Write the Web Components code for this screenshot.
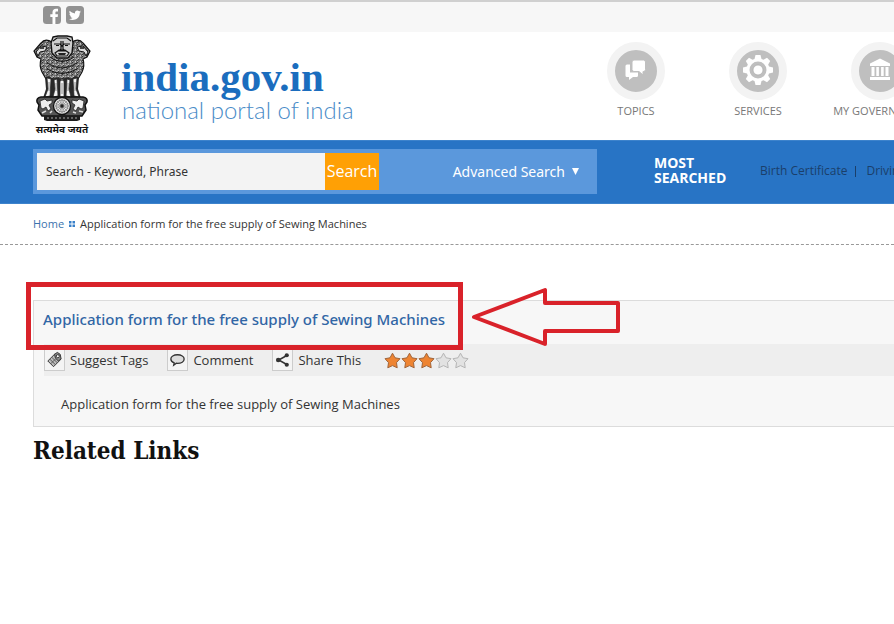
<!DOCTYPE html>
<html lang="en">
<head>
  <meta charset="utf-8">
  <meta name="viewport" content="width=device-width, initial-scale=1">
  <title>india.gov.in - National Portal of India</title>
  <style>
    :root {
      --color-blue: #2874c5;
      --color-blue-light: #5b98dc;
      --color-link: #3b73ae;
      --color-orange: #ffa005;
      --color-red: #d9222a;
      --color-panel: #f7f7f7;
      --page-inset: 33px;
    }

    body {
      margin: 0;
      overflow-x: hidden;
      background: #fff;
      color: #333;
      font-family: "Open Sans", "Noto Sans", sans-serif;
      font-size: 13px;
      line-height: 16px;
    }
  </style>
</head>
<body>
  <social-bar></social-bar>
  <site-header>
    <nav-item icon="topics">TOPICS</nav-item>
    <nav-item icon="services">SERVICES</nav-item>
    <nav-item icon="government">MY GOVERNMENT</nav-item>
  </site-header>
  <search-band>
    <a href="#birth">Birth Certificate</a>
    <a href="#driving">Driving Licence</a>
  </search-band>
  <bread-crumb>Application form for the free supply of Sewing Machines</bread-crumb>
  <main>
    <content-card>
      <span slot="title">Application form for the free supply of Sewing Machines</span>
      <tool-link slot="tools" icon="tag">Suggest Tags</tool-link>
      <tool-link slot="tools" icon="comment">Comment</tool-link>
      <tool-link slot="tools" icon="share">Share This</tool-link>
      <star-rating slot="tools" value="3"></star-rating>
      Application form for the free supply of Sewing Machines
    </content-card>
    <section-title>Related Links</section-title>
  </main>

  <script>
    class SocialBar extends HTMLElement {
      constructor() {
        super();
        this.attachShadow({ mode: 'open' });
      }

      connectedCallback() {
        this.shadowRoot.innerHTML = `
          <style>
            :host {
              display: flex;
              gap: 5px;
              padding: 4px 43px 8px;
              border-top: 2px solid #d0d0d0;
              background: #f7f7f7;
            }

            a, svg {
              display: block;
              width: 18px;
              height: 18px;
            }
          </style>
          <a href="#facebook" aria-label="Facebook">
            <svg viewBox="0 0 18 18">
              <rect width="18" height="18" rx="3.5" fill="#929292"/>
              <path d="M9.5 18v-7H7.3V8.2h2.2V6.3C9.5 4 10.9 2.8 13 2.8h2v2.7h-1.4c-.9 0-1.2.5-1.2 1.2v1.5H15l-.3 2.8h-2.3v7z" fill="#fff"/>
            </svg>
          </a>
          <a href="#twitter" aria-label="Twitter">
            <svg viewBox="0 0 18 18">
              <rect width="18" height="18" rx="3.5" fill="#929292"/>
              <path d="M15 5.6c-.5.2-.9.3-1.4.4.5-.3.9-.8 1.1-1.4-.5.3-1 .5-1.6.6a2.5 2.5 0 0 0-4.2 2.2C6.8 7.3 5 6.3 3.7 4.8c-.7 1.2-.3 2.6.8 3.3-.4 0-.8-.1-1.1-.3 0 1.200.8 2.200 2 2.500-.4.1-.8.1-1.100 0 .3 1 1.200 1.700 2.300 1.700A5 5 0 0 1 3 13c3.500 2.200 10.800.9 10.800-6.200.5-.3.900-.7 1.200-1.200z" fill="#fff"/>
            </svg>
          </a>
        `;
      }
    }

    class SiteHeader extends HTMLElement {
      constructor() {
        super();
        this.attachShadow({ mode: 'open' });
      }

      connectedCallback() {
        this.shadowRoot.innerHTML = `
          <style>
            :host {
              display: flex;
              height: 108px;
              overflow: hidden;
              padding-left: var(--page-inset);
              background: #fff;
            }

            .logo {
              display: flex;
              flex: none;
              width: 542px;
              gap: 30px;
              color: inherit;
              text-decoration: none;
            }

            .emblem {
              display: flex;
              flex-direction: column;
              align-items: center;
              width: 58px;
              padding-top: 3px;
            }

            .emblem svg {
              display: block;
              flex: none;
            }

            .motto {
              color: #111;
              font-size: 10px;
              font-weight: bold;
              line-height: 14px;
              white-space: nowrap;
            }

            .name {
              display: flex;
              flex-direction: column;
              padding-top: 25px;
            }

            .name strong {
              color: #1b6dbe;
              font-family: "Liberation Serif", serif;
              font-size: 41px;
              line-height: 40px;
            }

            .name span {
              padding-left: 1px;
              color: #4a8cc8;
              font-family: Lato, sans-serif;
              font-size: 24px;
              font-weight: 300;
              line-height: 26px;
            }

            nav {
              display: flex;
              flex: none;
            }
          </style>
          <a class="logo" href="#home">
            <span class="emblem">
              <svg width="58" height="87" viewBox="0 0 58 87" aria-hidden="true">
                <defs>
                  <pattern id="curls" width="5" height="6" patternUnits="userSpaceOnUse">
                    <rect width="5" height="6" fill="#a8a8a8"/>
                    <path d="M0 1q1.500-2 2.500 0t2.500 0M0 4q1.500 2 2.500 0t2.500 0M1 1v2.500M3.800 3v2.500" fill="none" stroke="#1c1c1c" stroke-width=".9"/>
                    <path d="M2.300 2.500l.8 1.300M.2 5.300l.8-.8" stroke="#fff" stroke-width=".9"/>
                  </pattern>
                </defs>
                <!-- manes -->
                <path d="M19 7Q12 3 8 8L1 16l3 6 4 2q-2 7 1 13l4 7h32l4-7q3-6 1-13l4-2 3-6-7-8q-4-5-11-1z" fill="url(#curls)" stroke="#111" stroke-width="1.200"/>
                <path d="M3 17l5-6 6 1-2 4-5 1-2 4zM55 17l-5-6-6 1 2 4 5 1 2 4z" fill="#ddd" stroke="#111" stroke-width="1"/>
                <path d="M7 13h4M47 13h4" stroke="#111" stroke-width="1.500"/>
                <!-- front face -->
                <path d="M20 2l5-1h9l5 1 1 6-1 10-4 5H24l-5-5-1-10z" fill="#d0d0d0" stroke="#111" stroke-width="1.400"/>
                <path d="M20 6l4-3h10l4 3M21 9h6l2 2 2-2h6M23 10.500h3M32 10.500h3M28 6v8l-2 2h6l-2-2V6M22 18l4-3h6l4 3-2 3H24z" fill="none" stroke="#111" stroke-width="1.200"/>
                <path d="M25 18h8l-1 2h-6z" fill="#222"/>
                <path d="M17 22q12 9 24 0M14 28q15 10 30 0M14 34q15 9 30 0" fill="none" stroke="#161616" stroke-width="1"/>
                <!-- legs -->
                <path d="M12 42l4-1 4 3 4-2 5 3 5-3 4 2 4-3 4 1-1 12 3 9H10l3-9z" fill="#292929"/>
                <path d="M14 43l4 1-1 17-5 1 3-8zM21 45l3-1 1 17-5 1 2-8zM27 46l2-1 2 1v16h-4zM34 44l3 1-1 9 2 8-5-1zM40 44l4-1-1 11 3 8-5-1z" fill="#f4f4f4" stroke="#222" stroke-width=".7"/>
                <path d="M16 47v9M23 48v8M29 48v11M35 48v8M42 47v9" stroke="#777" stroke-width=".8"/>
                <!-- abacus and wheel -->
                <path d="M8 62h42q5 1 4 5l-2 3 1 5-4 6H9l-4-6 1-5-2-3q-1-4 4-5z" fill="#555" stroke="#111" stroke-width="1.500"/>
                <path d="M7 66l5-2 2 2 5-1v3l-3 2 2 4-3 2-2-4-3 2-2-1zM51 66l-5-2-2 2-5-1v3l3 2-2 4 3 2 2-4 3 2 2-1z" fill="#eee" stroke="#222" stroke-width=".8"/>
                <path d="M9 78l4-2M17 78l2-2M40 77l3 1M46 76l4 1" stroke="#ddd" stroke-width="1.500"/>
                <circle cx="29" cy="71" r="8.500" fill="#e8e8e8" stroke="#111" stroke-width="1.300"/>
                <circle cx="29" cy="71" r="6" fill="none" stroke="#666" stroke-width=".7"/>
                <path d="M29 64v14M22 71h14M24 66l10 10M34 66L24 76M26.300 64.500l5.400 13M31.700 64.500l-5.400 13M22.500 68.300l13 5.400M35.500 68.300l-13 5.400" stroke="#666" stroke-width=".6"/>
                <circle cx="29" cy="71" r="1.700" fill="#222"/>
                <path d="M11 81h36v4l-3 1H14l-3-1z" fill="#1d1d1d"/>
                <path d="M14 83h31" stroke="#aaa" stroke-dasharray="2 2" stroke-width="1"/>
              </svg>
              <span class="motto" lang="sa">सत्यमेव जयते</span>
            </span>
            <span class="name">
              <strong>india.gov.in</strong>
              <span>national portal of india</span>
            </span>
          </a>
          <nav aria-label="Main"><slot></slot></nav>
        `;
      }
    }

    const navIcons = {
      topics: `
        <path d="M19 21.500h3v8h8v3q0 1.500-1.500 1.500H25l-4 3v-3h-2q-1.500 0-1.500-1.500V23q0-1.500 1.500-1.500z"/>
        <path d="M26 17h9.500q2 0 2 2v7.500q0 2-2 2h-.5v3.500l-4-3.500h-5q-2 0-2-2V19q0-2 2-2z" stroke="#bfbfbf"/>`,
      services: `
        <path fill-rule="evenodd" d="M25.500 12h5l1 4 2 .8 3.500-2 3.200 3.200-2 3.500.8 2 4 1v5l-4 1-.8 2 2 3.500-3.200 3.200-3.500-2-2 .8-1 4h-5l-1-4-2-.8-3.500 2-3.200-3.200 2-3.500-.8-2-4-1v-5l4-1 .8-2-2-3.500 3.200-3.200 3.500 2 2-.8zM28 18.500a8.500 8.500 0 1 0 0 17 8.500 8.500 0 0 0 0-17z"/>
        <circle cx="28" cy="27" r="5" stroke="#aaa" stroke-width=".7"/>`,
      government: `
        <path d="M28 15.500l10 5v2.500H18v-2.500zM19.500 24h3v9h-3zM24.300 24h2.600v9h-2.600zM29.100 24h2.600v9h-2.600zM33.500 24h3v9h-3zM18 34h20v3H18z"/>`
    };

    class NavItem extends HTMLElement {
      constructor() {
        super();
        this.attachShadow({ mode: 'open' });
      }

      connectedCallback() {
        this.shadowRoot.innerHTML = `
          <style>
            :host {
              display: block;
              flex: none;
              width: 122px;
            }

            a {
              display: flex;
              flex-direction: column;
              align-items: center;
              gap: 3px;
              padding-top: 10px;
              color: #777;
              font-size: 11px;
              line-height: 16px;
              text-decoration: none;
              white-space: nowrap;
            }

            .circle {
              box-sizing: border-box;
              width: 58px;
              height: 58px;
              border: 8px solid #f3f3f3;
              border-radius: 50%;
              background: #bfbfbf;
            }

            svg {
              display: block;
              width: 56px;
              height: 56px;
              margin: -7px;
              fill: #fff;
            }
          </style>
          <a href="#${this.getAttribute('icon')}">
            <span class="circle">
              <svg viewBox="0 0 56 56" aria-hidden="true">${navIcons[this.getAttribute('icon')]}</svg>
            </span>
            <slot></slot>
          </a>
        `;
      }
    }

    class SearchBand extends HTMLElement {
      constructor() {
        super();
        this.attachShadow({ mode: 'open' });
      }

      connectedCallback() {
        this.shadowRoot.innerHTML = `
          <style>
            :host {
              display: flex;
              align-items: center;
              height: 60px;
              padding: 0 0 2px var(--page-inset);
              border: solid #3d83cc;
              border-width: 1px 0;
              overflow: hidden;
              background: var(--color-blue);
            }

            form {
              box-sizing: border-box;
              display: flex;
              flex: none;
              width: 564px;
              padding: 4px;
              background: var(--color-blue-light);
            }

            input {
              box-sizing: border-box;
              width: 288px;
              height: 37px;
              padding: 0 9px;
              border: 0;
              border-radius: 0;
              background: #f3f3f3;
              color: #333;
              font: 12px "Noto Sans", sans-serif;
            }

            button {
              padding: 0;
              border: 0;
              font: 14px "Noto Sans", sans-serif;
              color: #fff;
            }

            .submit {
              width: 54px;
              background: var(--color-orange);
              font: 16px "Open Sans", sans-serif;
            }

            .advanced {
              display: flex;
              align-items: center;
              gap: 7px;
              margin-left: auto;
              padding-right: 14px;
              background: none;
            }

            .advanced svg {
              width: 7px;
              height: 7px;
              fill: #fff;
            }

            h2 {
              flex: none;
              width: 106px;
              margin: 0 0 2px 57px;
              color: #fff;
              font-size: 14px;
              font-weight: 700;
              line-height: 15px;
            }

            h2 span {
              display: block;
            }

            nav {
              display: flex;
              flex: none;
              white-space: nowrap;
            }

            ::slotted(a) {
              padding-right: 8px;
              color: #1b3f6a;
              font-size: 12px;
              text-decoration: none;
            }

            ::slotted(a:not(:first-child)) {
              padding-left: 11px;
              background: linear-gradient(#1b3f6a, #1b3f6a) 0 3px / 1px 11px no-repeat;
            }
          </style>
          <form>
            <input type="text" name="q" aria-label="Search keyword or phrase" value="Search - Keyword, Phrase">
            <button class="submit" type="button">Search</button>
            <button class="advanced" type="button">
              Advanced Search
              <svg viewBox="0 0 7 7" aria-hidden="true"><path d="M0 0h7L3.500 7z"/></svg>
            </button>
          </form>
          <h2><span>MOST</span> <span>SEARCHED</span></h2>
          <nav aria-label="Most searched"><slot></slot></nav>
        `;
      }
    }

    class BreadCrumb extends HTMLElement {
      constructor() {
        super();
        this.attachShadow({ mode: 'open' });
      }

      connectedCallback() {
        this.shadowRoot.innerHTML = `
          <style>
            :host {
              display: block;
              padding: 12px var(--page-inset);
              border-bottom: 1px dashed #999;
              font-size: 11px;
            }

            nav {
              display: flex;
              align-items: center;
              gap: 5px;
            }

            a {
              color: var(--color-link);
              text-decoration: none;
            }

            svg {
              width: 6px;
              height: 6px;
              fill: #3980c9;
            }
          </style>
          <nav aria-label="Breadcrumb">
            <a href="#home">Home</a>
            <svg viewBox="0 0 6 6" aria-hidden="true"><path d="M0 0h2.500v2.500H0zM3.500 0H6v2.500H3.500zM0 3.500h2.500V6H0zM3.500 3.500H6V6H3.500z"/></svg>
            <span><slot></slot></span>
          </nav>
        `;
      }
    }

    class ContentCard extends HTMLElement {
      constructor() {
        super();
        this.attachShadow({ mode: 'open' });
      }

      connectedCallback() {
        this.shadowRoot.innerHTML = `
          <style>
            :host {
              display: block;
              position: relative;
              margin: 55px 0 0 var(--page-inset);
              border: solid #dcdcdc;
              border-width: 1px 0 1px 1px;
              background: var(--color-panel);
            }

            h1 {
              margin: 0;
              padding: 8px 9px 11px;
              color: #3166a5;
              font-family: "Noto Sans", "Open Sans", sans-serif;
              font-size: 15px;
              font-weight: 500;
              line-height: 20px;
            }

            .tools {
              display: flex;
              align-items: center;
              height: 32px;
              margin: 4px 0 0 10px;
              background: #eee;
            }

            p {
              margin: 0;
              padding: 20px 27px 14px;
              line-height: 16px;
            }

            /* hand-marked highlight over the title */
            .frame {
              position: absolute;
              top: -19px;
              left: -8px;
              box-sizing: border-box;
              width: 437px;
              height: 68px;
              border: 5px solid var(--color-red);
            }

            .arrow {
              position: absolute;
              top: -15px;
              left: 436px;
              fill: none;
              stroke: var(--color-red);
              stroke-width: 4;
            }
          </style>
          <h1><slot name="title"></slot></h1>
          <div class="tools"><slot name="tools"></slot></div>
          <p><slot></slot></p>
          <div class="frame"></div>
          <svg class="arrow" width="152" height="64" viewBox="0 0 152 64" aria-hidden="true">
            <path d="M4 31L75 4v13h73v28H75v13z" stroke-linejoin="round"/>
          </svg>
        `;
      }
    }

    const toolIcons = {
      tag: `
        <path d="M3 11l7-7 5 1 1 5-7 7z" fill="#bbb"/>
        <path d="M6 14l7-7M3 11l6 6M5 9l6 6M7 7l6 6" stroke="#555"/>
        <path d="M10 4l3-2 3 2 1 5-3 2-3-3z" fill="#888"/>
        <circle cx="13.500" cy="6" r="1.600" fill="#fff"/>`,
      comment: `
        <path d="M10 4.500c4 0 7 1.800 7 4.500s-3 4.500-7 4.500l-1.200-.1L6 15.500l.5-2.500C4.300 12.200 3 10.800 3 9c0-2.700 3-4.500 7-4.500z" fill="#ddd" stroke-width="1.400"/>`,
      share: `
        <path d="M15 5L6 10l9 5" stroke-width="1.600"/>
        <g fill="#333" stroke="none"><circle cx="14.500" cy="5" r="2.200"/><circle cx="5.500" cy="10" r="2.400"/><circle cx="14.500" cy="15" r="2.200"/></g>`
    };

    class ToolLink extends HTMLElement {
      constructor() {
        super();
        this.attachShadow({ mode: 'open' });
      }

      connectedCallback() {
        this.shadowRoot.innerHTML = `
          <style>
            :host {
              display: block;
              margin-right: 19px;
            }

            a {
              display: flex;
              align-items: center;
              gap: 5px;
              color: #333;
              line-height: 20px;
              text-decoration: none;
              white-space: nowrap;
            }

            svg {
              box-sizing: border-box;
              width: 21px;
              height: 22px;
              border: 1px solid #ccc;
              background: #f4f4f4;
              fill: none;
              stroke: #333;
            }
          </style>
          <a href="#${this.getAttribute('icon')}">
            <svg viewBox="0 0 20 20" aria-hidden="true">${toolIcons[this.getAttribute('icon')]}</svg>
            <slot></slot>
          </a>
        `;
      }
    }

    class StarRating extends HTMLElement {
      constructor() {
        super();
        this.attachShadow({ mode: 'open' });
      }

      connectedCallback() {
        const value = Number(this.getAttribute('value'));
        const stars = [1, 2, 3, 4, 5].map(n => `
          <svg class="${n <= value ? 'on' : ''}" viewBox="0 0 17 17" aria-hidden="true">
            <path d="M8.500 1.200l2.500 4.600 5 .9-3.500 3.900.7 5.200-4.700-2.200-4.700 2.200.7-5.200L1 6.700l5-.9z"/>
          </svg>`).join('');

        this.setAttribute('role', 'img');
        this.setAttribute('aria-label', `${value} of 5 stars`);
        this.shadowRoot.innerHTML = `
          <style>
            :host {
              display: flex;
              margin-left: 4px;
            }

            svg {
              width: 17px;
              height: 17px;
              fill: #e2e2e2;
              stroke: #b5b5b5;
              stroke-linejoin: round;
            }

            .on {
              fill: #ee8432;
              stroke: #a0643a;
            }
          </style>
          ${stars}
        `;
      }
    }

    class SectionTitle extends HTMLElement {
      constructor() {
        super();
        this.attachShadow({ mode: 'open' });
      }

      connectedCallback() {
        this.shadowRoot.innerHTML = `
          <style>
            :host {
              display: block;
              padding: 8px var(--page-inset);
            }

            h2 {
              margin: 0;
              color: #111;
              font-family: "Roboto Slab", "DejaVu Serif Condensed", "DejaVu Serif", serif;
              font-size: 24px;
              font-weight: 700;
              line-height: 32px;
            }
          </style>
          <h2><slot></slot></h2>
        `;
      }
    }

    customElements.define('social-bar', SocialBar);
    customElements.define('site-header', SiteHeader);
    customElements.define('nav-item', NavItem);
    customElements.define('search-band', SearchBand);
    customElements.define('bread-crumb', BreadCrumb);
    customElements.define('content-card', ContentCard);
    customElements.define('tool-link', ToolLink);
    customElements.define('star-rating', StarRating);
    customElements.define('section-title', SectionTitle);
  </script>
</body>
</html>
